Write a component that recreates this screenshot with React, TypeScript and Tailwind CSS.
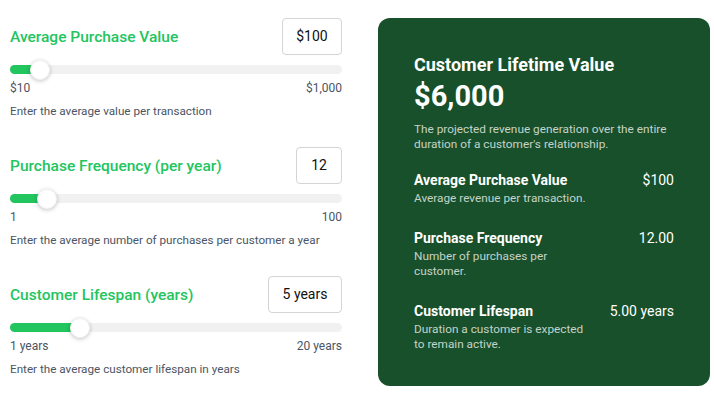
import { useState } from "react";

type Field = {
  label: string;
  min: number;
  max: number;
  value: number;
  box: string;
  minLabel: string;
  maxLabel: string;
  hint: string;
  format: (v: number) => string;
};

function Slider({ f }: { f: Field }) {
  const pct = ((f.value - f.min) / (f.max - f.min)) * 100;
  return (
    <div className="relative mt-[10px] h-[9px] w-full rounded-full bg-[#f1f1f1]">
      <div className="h-full rounded-full bg-[#22c55e]" style={{ width: `${pct}%` }} />
      <div
        className="absolute top-1/2 h-[20px] w-[20px] -translate-x-1/2 -translate-y-1/2 rounded-full border border-gray-100 bg-white shadow-[0_1px_4px_rgba(0,0,0,0.25)]"
        style={{ left: `${pct}%` }}
      />
    </div>
  );
}

function InputBlock({ f }: { f: Field }) {
  return (
    <div>
      <div className="flex h-[37px] items-center justify-between">
        <span className="mt-[3px] text-[15.5px] font-medium text-[#22c55e]">{f.label}</span>
        <div
          className={`flex h-[37px] items-center justify-center rounded-[4px] border border-[#d4d4d4] text-[14px] text-[#111] ${f.box}`}
        >
          {f.format(f.value)}
        </div>
      </div>
      <Slider f={f} />
      <div className="mt-[6px] flex justify-between text-[12px] leading-4 text-[#4b5563]">
        <span>{f.minLabel}</span>
        <span>{f.maxLabel}</span>
      </div>
      <p className="mt-[7px] text-[11.7px] leading-4 text-[#4b5563]">{f.hint}</p>
    </div>
  );
}

function ResultRow({ title, desc, value }: { title: string; desc: string; value: string }) {
  return (
    <div className="flex items-start justify-between">
      <div className="w-[176px]">
        <div className="text-[14px] font-bold leading-5 text-white">{title}</div>
        <div className="mt-[1px] text-[11.8px] leading-[15px] text-white/75">{desc}</div>
      </div>
      <div className="text-[14px] leading-5 text-white">{value}</div>
    </div>
  );
}

export default function App() {
  const [avg] = useState(100);
  const [freq] = useState(12);
  const [life] = useState(5);

  const fields: Field[] = [
    {
      label: "Average Purchase Value",
      min: 10,
      max: 1000,
      value: avg,
      box: "w-[60px]",
      minLabel: "$10",
      maxLabel: "$1,000",
      hint: "Enter the average value per transaction",
      format: (v) => `$${v}`,
    },
    {
      label: "Purchase Frequency (per year)",
      min: 1,
      max: 100,
      value: freq,
      box: "w-[46px]",
      minLabel: "1",
      maxLabel: "100",
      hint: "Enter the average number of purchases per customer a year",
      format: (v) => `${v}`,
    },
    {
      label: "Customer Lifespan (years)",
      min: 1,
      max: 20,
      value: life,
      box: "w-[74px]",
      minLabel: "1 years",
      maxLabel: "20 years",
      hint: "Enter the average customer lifespan in years",
      format: (v) => `${v} years`,
    },
  ];

  const clv = avg * freq * life;

  return (
    <div className="flex gap-[36px] bg-white pl-[10px] pt-[18px] font-['Roboto',sans-serif]">
      <div className="flex w-[332px] shrink-0 flex-col gap-[28px]">
        {fields.map((f) => (
          <InputBlock key={f.label} f={f} />
        ))}
      </div>

      <div className="h-[368px] w-[332px] shrink-0 rounded-[12px] bg-[#17502a] px-[36px] pt-[35px]">
        <h2 className="text-[18px] font-bold leading-6 text-white">Customer Lifetime Value</h2>
        <div className="mt-[1px] text-[29px] font-bold leading-[36px] text-white">
          ${clv.toLocaleString("en-US")}
        </div>
        <p className="mt-[8px] text-[11.8px] leading-[15px] text-white/75">
          The projected revenue generation over the entire duration of a customer's relationship.
        </p>
        <div className="mt-[18px] flex flex-col gap-[22px]">
          <ResultRow title="Average Purchase Value" desc="Average revenue per transaction." value={`$${avg}`} />
          <ResultRow title="Purchase Frequency" desc="Number of purchases per customer." value={freq.toFixed(2)} />
          <ResultRow
            title="Customer Lifespan"
            desc="Duration a customer is expected to remain active."
            value={`${life.toFixed(2)} years`}
          />
        </div>
      </div>
    </div>
  );
}
